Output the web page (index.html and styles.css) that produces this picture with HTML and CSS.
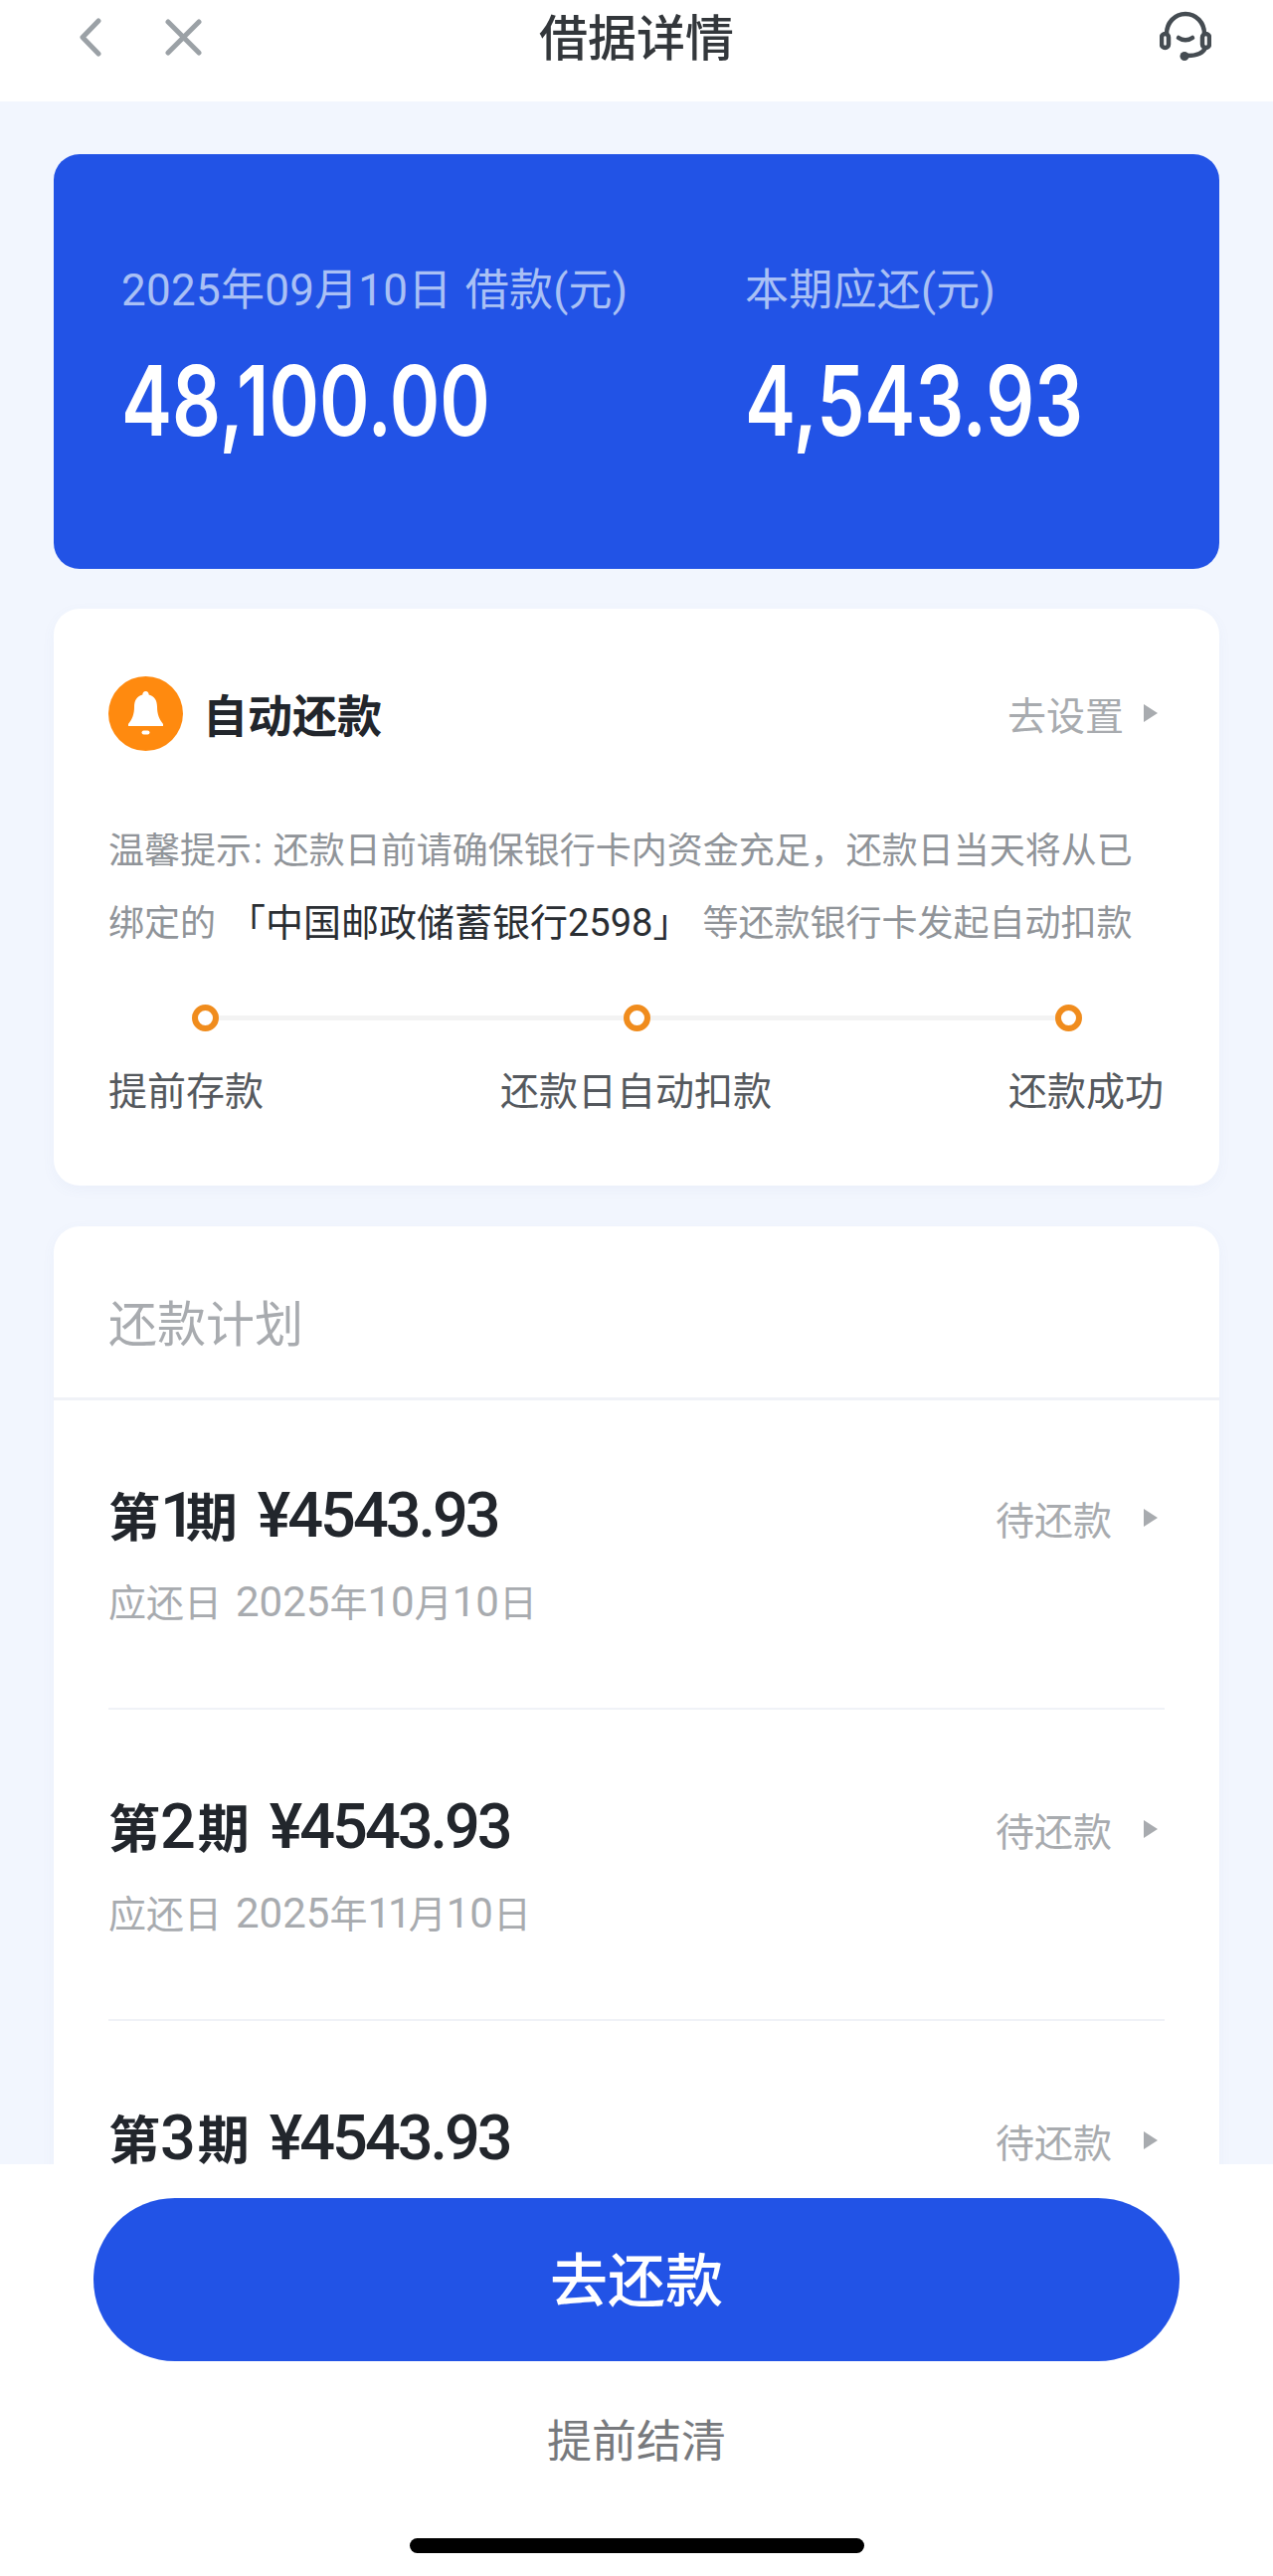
FILE: index.html
```html
<!DOCTYPE html>
<html lang="zh-CN">
<head>
  <meta charset="UTF-8">
  <meta name="viewport" content="width=device-width, initial-scale=1">
  <title>借据详情</title>
  <link rel="stylesheet" href="styles.css">
</head>
<body>
  <header class="topbar">
    <div class="topbar-left">
      <svg class="icon-back" width="22" height="39" viewBox="0 0 22 39"><path d="M19 3 3 19.5 19 36"/></svg>
      <svg class="icon-close" width="37" height="37" viewBox="0 0 37 37"><path d="M3 3 34 34M34 3 3 34"/></svg>
    </div>
    <h1 class="topbar-title">借据详情</h1>
    <div class="topbar-right">
      <svg class="icon-service" width="52" height="52" viewBox="0 0 52 52">
        <path d="M7 23C7 12 15 3 26 3s19 9 19 20"/>
        <rect x="2" y="23" width="7" height="14" rx="3.5"/>
        <rect x="43" y="23" width="7" height="14" rx="3.5"/>
        <path d="M19 27c4 3 10 3 14 0"/>
        <path d="M46 37c-2 5-9 8-18 8"/>
        <circle class="icon-fill" cx="25" cy="45.5" r="4.5"/>
      </svg>
    </div>
  </header>

  <main class="content">
    <!-- Loan summary -->
    <section class="summary">
      <div class="summary-col">
        <div class="summary-label">2025年09月10日 借款(元)</div>
        <div class="summary-amount">48,100.00</div>
      </div>
      <div class="summary-col">
        <div class="summary-label">本期应还(元)</div>
        <div class="summary-amount">4,543.93</div>
      </div>
    </section>

    <!-- Auto repayment -->
    <section class="card auto">
      <div class="auto-head">
        <div class="auto-title">
          <svg class="bell" width="75" height="75" viewBox="0 0 75 75">
            <circle cx="37.5" cy="37.5" r="37.5" fill="#ff8a0f"/>
            <path fill="#fff" d="M37.5 15c2 0 3 1.400 3.200 3.400 6 1.600 8.300 6.200 8.300 12.100 0 7.500 2 12.500 6 17.500v2H20v-2c4-5 6-10 6-17.500 0-5.900 2.300-10.500 8.300-12.100.2-2 1.200-3.400 3.200-3.400z"/>
            <rect x="33.500" y="54.500" width="8" height="4" rx="2" fill="#fff"/>
          </svg>
          <span>自动还款</span>
        </div>
        <div class="more more-set">去设置<i class="arrow"></i></div>
      </div>
      <p class="hint">温馨提示<span class="hint-colon">:</span> 还款日前请确保银行卡内资金充足，还款日当天将从已<br>绑定的<span class="hint-bank">「中国邮政储蓄银行2598」</span>等还款银行卡发起自动扣款</p>
      <div class="track">
        <span class="dot"></span>
        <span class="line"></span>
        <span class="dot"></span>
        <span class="line"></span>
        <span class="dot"></span>
      </div>
      <div class="steps">
        <span>提前存款</span>
        <span>还款日自动扣款</span>
        <span>还款成功</span>
      </div>
    </section>

    <!-- Repayment plan -->
    <section class="card plan">
      <h2 class="plan-title">还款计划</h2>
      <div class="plan-list">
        <div class="plan-row">
          <div class="plan-top">
            <div class="plan-name">第<b class="term term-one">1</b>期<b class="money">¥4543.93</b></div>
            <div class="more">待还款<i class="arrow"></i></div>
          </div>
          <div class="plan-date">应还日<b class="year">2025</b>年<b>10</b>月<b>10</b>日</div>
        </div>
        <div class="plan-row">
          <div class="plan-top">
            <div class="plan-name">第<b class="term">2</b>期<b class="money">¥4543.93</b></div>
            <div class="more">待还款<i class="arrow"></i></div>
          </div>
          <div class="plan-date">应还日<b class="year">2025</b>年<b class="tight">11</b>月<b>10</b>日</div>
        </div>
        <div class="plan-row">
          <div class="plan-top">
            <div class="plan-name">第<b class="term">3</b>期<b class="money">¥4543.93</b></div>
            <div class="more">待还款<i class="arrow"></i></div>
          </div>
        </div>
      </div>
    </section>
  </main>

  <footer class="actions">
    <button class="pay-btn">去还款</button>
    <a class="settle-link">提前结清</a>
    <div class="home-bar"></div>
  </footer>
</body>
</html>
```

FILE: styles.css
```css
* {
  box-sizing: border-box;
}

body {
  margin: 0;
  height: 100vh;
  display: flex;
  flex-direction: column;
  overflow: hidden;
  background-color: #f2f6fe;
  color: #22262c;
  font-family: Roboto, "Noto Sans CJK SC", sans-serif;
}

/* Top bar */
.topbar {
  flex: none;
  height: 102px;
  display: grid;
  grid-template-columns: 1fr auto 1fr;
  padding: 0 62px;
  background-color: #fff;
}

.topbar-left {
  display: flex;
  align-items: center;
  gap: 64px;
  height: 74px;
  padding-left: 18px;
}

.topbar-left svg path {
  fill: none;
  stroke: #9ba1a6;
  stroke-width: 5;
  stroke-linecap: round;
  stroke-linejoin: round;
}

.topbar-title {
  margin: 0;
  padding-top: 4px;
  font-size: 49px;
  line-height: 72px;
  font-weight: 500;
  color: #33373b;
}

.topbar-right {
  display: flex;
  justify-content: flex-end;
  padding-top: 11px;
}

.icon-service path,
.icon-service rect {
  fill: none;
  stroke: #454c52;
  stroke-width: 4.500;
  stroke-linecap: round;
}

.icon-service .icon-fill {
  fill: #454c52;
}

.content {
  flex: 1;
  min-height: 0;
  overflow: hidden;
  padding: 53px 54px 0;
}

.summary {
  height: 417px;
  display: grid;
  grid-template-columns: 627px 1fr;
  padding: 107px 0 0 68px;
  border-radius: 26px;
  background-color: #2253e6;
}

.summary-label {
  font-size: 44px;
  line-height: 60px;
  letter-spacing: 0.25px;
  word-spacing: 2px;
  color: #a9c0f5;
}

.summary-amount {
  margin-top: 31px;
  font-family: Inter, Roboto, sans-serif;
  font-size: 97px;
  line-height: 100px;
  font-weight: 600;
  color: #fff;
  transform: scaleX(0.79);
  transform-origin: left center;
}

.card {
  margin-top: 40px;
  border-radius: 26px;
  background-color: #fff;
  box-shadow: 0 4px 14px rgba(90, 110, 170, 0.05);
}

/* Auto repayment card */
.auto {
  height: 580px;
  padding: 69px 55px 0 55px;
}

.auto-head {
  display: flex;
  align-items: center;
  justify-content: space-between;
  height: 72px;
}

.auto-title {
  display: flex;
  align-items: center;
  gap: 20px;
  font-size: 45px;
  font-weight: 700;
}

.more {
  display: flex;
  align-items: center;
  font-size: 39px;
  color: #a8abaf;
}

.more-set .arrow {
  margin-left: 20px;
}

.arrow {
  width: 0;
  height: 0;
  margin: 0 7px 0 32px;
  border-left: 14px solid #a8abaf;
  border-top: 9px solid transparent;
  border-bottom: 9px solid transparent;
}

.hint {
  margin: 67px 0 0;
  font-size: 36px;
  line-height: 72px;
  color: #909499;
  white-space: nowrap;
}

.hint-colon {
  margin: 0 2px;
}

.hint-bank {
  margin: 0 12px;
  font-size: 38px;
  color: #2a2e33;
}

.track {
  display: flex;
  align-items: center;
  margin-top: 45px;
  padding: 0 83px 0 84px;
}

.dot {
  flex: none;
  width: 27px;
  height: 27px;
  border: 6px solid #f08c1d;
  border-radius: 50%;
}

.line {
  flex: 1;
  height: 5px;
  background-color: #f3f3f3;
}

.steps {
  display: flex;
  justify-content: space-between;
  margin-top: 36px;
  padding-right: 1px;
  font-size: 39px;
  line-height: 50px;
  color: #55595e;
}

/* Repayment plan card */
.plan {
  margin-top: 41px;
  padding-bottom: 40px;
}

.plan-title {
  margin: 0;
  height: 175px;
  padding: 70px 55px 0;
  border-bottom: 3px solid #f0f2f7;
  font-size: 49px;
  line-height: 60px;
  font-weight: 400;
  color: #a8abaf;
}

.plan-list {
  padding: 0 55px;
}

.plan-row {
  height: 313px;
  padding-top: 82px;
  border-bottom: 2px solid #f0f2f7;
}

.plan-row:first-child {
  height: 311px;
  padding-top: 80px;
}

.plan-top {
  display: flex;
  align-items: center;
  justify-content: space-between;
  height: 70px;
}

.plan-top .more {
  margin-top: 6px;
}

.plan-name {
  padding-top: 5px;
  font-size: 52px;
  line-height: 70px;
  font-weight: 700;
  white-space: nowrap;
}

.plan-name b {
  font-size: 63px;
  font-weight: 500;
}

/* the 1 is narrower than the other digits in the original font */
.term {
  letter-spacing: 2px;
}

.term-one {
  letter-spacing: -10px;
}

.money {
  margin-left: 20px;
  letter-spacing: -3px;
}

.plan-date {
  margin-top: 28px;
  font-size: 38px;
  line-height: 50px;
  color: #a8abaf;
}

.plan-date b {
  font-size: 42px;
  font-weight: 400;
}

.plan-date .year {
  margin-left: 14px;
}

.plan-date .tight {
  letter-spacing: -3px;
}

/* Bottom actions */
.actions {
  flex: none;
  position: relative;
  height: 414px;
  display: flex;
  flex-direction: column;
  align-items: center;
  padding-top: 34px;
  background-color: #fff;
}

.pay-btn {
  width: 1092px;
  height: 164px;
  padding-bottom: 8px;
  border: none;
  border-radius: 82px;
  background-color: #2253e6;
  color: #fff;
  font-family: inherit;
  font-size: 58px;
  font-weight: 500;
}

.settle-link {
  margin-top: 52px;
  font-size: 45px;
  line-height: 60px;
  color: #77797d;
}

.home-bar {
  width: 457px;
  height: 15px;
  margin-top: 66px;
  border-radius: 8px;
  background-color: #000;
}
```
